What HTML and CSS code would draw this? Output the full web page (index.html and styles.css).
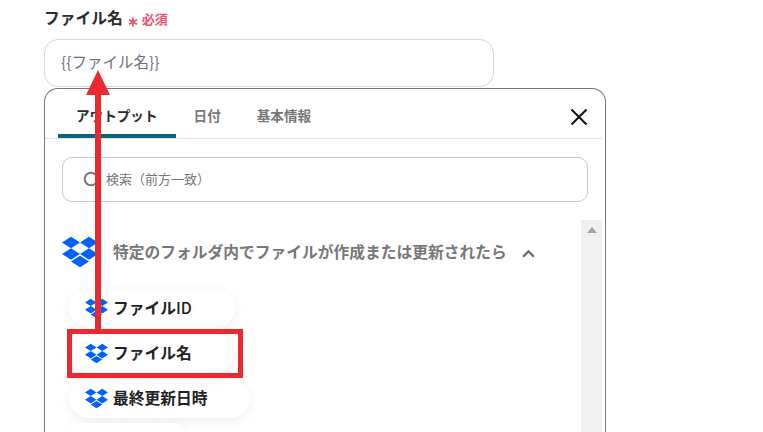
FILE: index.html
```html
<!DOCTYPE html>
<html lang="ja">
<head>
<meta charset="UTF-8">
<meta name="viewport" content="width=device-width, initial-scale=1.0">
<title>ファイル名</title>
<link rel="stylesheet" href="styles.css">
</head>
<body>

<svg class="defs" width="0" height="0">
    <symbol id="dropbox" viewBox="0 0 24 24">
        <path d="M6 1.807L0 5.629l6 3.822 6.001-3.822L6 1.807zM18 1.807l-6 3.822 6 3.822 6-3.822-6-3.822zM0 13.274l6 3.822 6.001-3.822L6 9.452l-6 3.822zM18 9.452l-6 3.822 6 3.822 6-3.822-6-3.822zM6 18.371l6.001 3.822 6-3.822-6-3.822L6 18.371z"/>
    </symbol>
</svg>

<div class="form">
    <div class="field-label">
        <span class="label-text">ファイル名</span>
        <svg class="required-mark" viewBox="0 0 10 10"><path d="M5 0.500V9.500M1 2.700L9 7.300M9 2.700L1 7.300"/></svg>
        <span class="required-text">必須</span>
    </div>
    <div class="text-input">{{ファイル名}}</div>

    <div class="popup">
        <div class="tabs">
            <div class="tab active">アウトプット</div>
            <div class="tab">日付</div>
            <div class="tab">基本情報</div>
            <svg class="close" viewBox="0 0 18 18"><path d="M1.500 1.500L16.500 16.500M16.500 1.500L1.500 16.500"/></svg>
        </div>
        <div class="search">
            <svg class="search-icon" viewBox="0 0 18 18"><circle cx="8" cy="8" r="6.300"/><path d="M12.500 12.500L16.500 16.500"/></svg>
            <span>検索（前方一致）</span>
        </div>
        <div class="list">
            <div class="list-body">
                <div class="group">
                    <svg class="group-logo"><use href="#dropbox"/></svg>
                    <span class="group-title">特定のフォルダ内でファイルが作成または更新されたら</span>
                    <svg class="chevron" viewBox="0 0 12 8"><path d="M1 7L6 2L11 7"/></svg>
                </div>
                <div class="pills">
                    <div class="pill pill-id"><svg class="pill-logo"><use href="#dropbox"/></svg>ファイル<span class="latin">ID</span></div>
                    <div class="pill pill-name"><svg class="pill-logo"><use href="#dropbox"/></svg>ファイル名</div>
                    <div class="pill pill-date"><svg class="pill-logo"><use href="#dropbox"/></svg>最終更新日時</div>
                </div>
            </div>
            <div class="scrollbar"><div class="scroll-up"></div></div>
        </div>
    </div>
</div>

<!-- 赤い注釈 -->
<div class="note-box"></div>
<div class="note-line"></div>
<div class="note-head"></div>
<div class="pill pill-more"></div>

</body>
</html>
```

FILE: styles.css
```css
html, body {
    height: 432px;
    overflow: hidden;
}
body {
    font-family: "Noto Sans CJK JP", "Noto Sans", sans-serif;
    margin: 0;
    padding: 0;
    background-color: #fff;
    color: #222;
    position: relative;
}
.defs {
    position: absolute;
}
.form {
    width: 562px;
    height: 425px;
    margin-left: 44px;
    padding-top: 7px;
}
.field-label {
    display: flex;
    align-items: center;
    height: 24px;
    margin-bottom: 8px;
}
.label-text {
    font-size: 15.750px;
    font-weight: 700;
    line-height: 22px;
    margin-top: -2px;
    color: #2b2b2b;
}
.required-mark {
    width: 10px;
    height: 10px;
    margin: 6px 0 0 5px;
    fill: none;
    stroke: #f4506c;
    stroke-width: 1.800;
}
.required-text {
    margin-left: 4px;
    font-size: 13px;
    font-weight: 700;
    line-height: 18px;
    color: #f4506c;
}
.text-input {
    box-sizing: border-box;
    width: 450px;
    height: 48px;
    padding-left: 16px;
    line-height: 43px;
    font-size: 15.500px;
    color: #6d7280;
    border: 1px solid #d3d6dc;
    border-radius: 14px;
}
.popup {
    box-sizing: border-box;
    height: 344px;
    margin-top: 1px;
    border: 1px solid #777;
    border-bottom: none;
    border-radius: 14px 14px 0 0;
    background-color: #fff;
}
.tabs {
    display: flex;
    height: 49px;
    margin-right: 3px;
    padding-left: 13px;
    border-bottom: 1px solid #e3e3e3;
}
.tab {
    padding: 0 18px;
    line-height: 52px;
    font-size: 13.600px;
    font-weight: 700;
    color: #777;
}
.tab.active {
    color: #2b2b2b;
    box-shadow: inset 0 -4px 0 #0b6378;
    border-radius: 3px 3px 0 0;
    height: 49px;
}
.close {
    width: 18px;
    height: 18px;
    margin: 19px 14px 0 auto;
    fill: none;
    stroke: #111;
    stroke-width: 2;
}
.search {
    box-sizing: border-box;
    display: flex;
    align-items: center;
    width: 526px;
    height: 45px;
    margin: 18px 0 18px 17px;
    padding-left: 20px;
    padding-bottom: 2px;
    font-size: 13px;
    color: #777;
    border: 1px solid #c8c8c8;
    border-radius: 10px;
}
.search-icon {
    width: 18px;
    height: 18px;
    margin-right: 5px;
    margin-top: 2px;
    fill: none;
    stroke: #777;
    stroke-width: 2;
}
.list {
    display: flex;
    height: 212px;
}
.list-body {
    flex: 1;
    padding-left: 17px;
}
.group {
    display: flex;
    align-items: center;
    height: 66px;
    padding-bottom: 3px;
    box-sizing: border-box;
}
.group-logo {
    width: 36px;
    height: 36px;
    fill: #0061fe;
}
.group-title {
    margin-left: 15px;
    font-size: 15.750px;
    font-weight: 700;
    color: #777;
}
.chevron {
    width: 13px;
    height: 9px;
    margin-left: 15px;
    margin-top: 3px;
    fill: none;
    stroke: #666;
    stroke-width: 2;
}
.pills {
    display: flex;
    flex-direction: column;
    align-items: flex-start;
    gap: 6px;
    padding: 3px 0 0 7px;
}
.pill {
    display: flex;
    align-items: center;
    box-sizing: border-box;
    height: 39px;
    padding-left: 16px;
    padding-bottom: 2px;
    font-size: 15.750px;
    font-weight: 700;
    color: #222;
    background-color: #fff;
    border-radius: 20px;
    box-shadow: 0 3px 12px rgba(0, 0, 0, 0.07);
}
.latin {
    font-weight: 500;
}
.pill-id {
    width: 166px;
}
.pill-name {
    width: 165px;
}
.pill-date {
    width: 181px;
}
.pill-more {
    position: absolute;
    left: 69px;
    top: 423px;
    width: 116px;
    height: 9px;
    padding: 0;
    border-radius: 20px 20px 0 0;
}
.pill-logo {
    width: 23px;
    height: 23px;
    margin-right: 5px;
    margin-top: 2px;
    fill: #0061fe;
}
.scrollbar {
    width: 21px;
    margin-right: 3px;
    background-color: #f0f0f0;
}
.scroll-up {
    width: 0;
    height: 0;
    margin: 7px auto 0;
    border-left: 5px solid transparent;
    border-right: 5px solid transparent;
    border-bottom: 6px solid #a3a3a3;
}
.note-box {
    position: absolute;
    left: 67px;
    top: 329px;
    width: 176px;
    height: 49px;
    box-sizing: border-box;
    border: 5px solid #ea2a2e;
}
.note-line {
    position: absolute;
    left: 95px;
    top: 94px;
    width: 6px;
    height: 236px;
    background-color: #ea2a2e;
}
.note-head {
    position: absolute;
    left: 86px;
    top: 70px;
    width: 0;
    height: 0;
    border-left: 12.500px solid transparent;
    border-right: 12.500px solid transparent;
    border-bottom: 25px solid #ea2a2e;
}
```
